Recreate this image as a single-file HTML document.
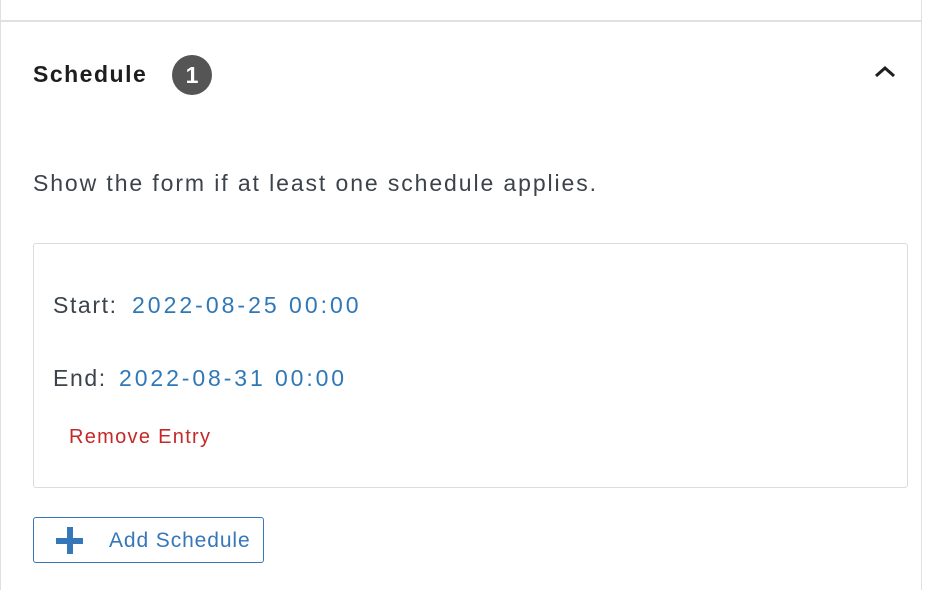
<!DOCTYPE html>
<html><head><style>
body{margin:0;width:940px;height:590px;background:#fff;font-family:"Liberation Sans",sans-serif;position:relative;overflow:hidden}
.a{position:absolute;white-space:nowrap}
</style></head><body>
<div class="a" style="left:0;top:0;width:1px;height:590px;background:#e0e0e0"></div>
<div class="a" style="left:921px;top:0;width:1px;height:590px;background:#e0e0e0"></div>
<div class="a" style="left:0;top:20px;width:922px;height:2px;background:#e0e0e0"></div>
<div class="a" style="left:33px;top:61px;font-size:23px;color:#1e1e1e;font-weight:bold;letter-spacing:1.5px">Schedule</div>
<div class="a" style="left:172px;top:55px;width:40px;height:40px;border-radius:50%;background:#555;color:#fff;font-size:23px;font-weight:bold;line-height:40px;text-align:center">1</div>
<svg class="a" style="left:872px;top:63px" width="26" height="18"><path d="M4 13 L13 5 L22 13" stroke="#1e1e1e" stroke-width="3" fill="none"/></svg>
<div class="a" style="left:33px;top:170px;font-size:23px;color:#3c434a;letter-spacing:1.9px">Show the form if at least one schedule applies.</div>
<div class="a" style="left:33px;top:243px;width:873px;height:243px;border:1px solid #dcdcde;border-radius:3px"></div>
<div class="a" style="left:53px;top:292px;font-size:23px;color:#3c434a;letter-spacing:1.6px">Start:</div>
<div class="a" style="left:132px;top:292px;font-size:23px;color:#2f78b8;letter-spacing:3px">2022-08-25 00:00</div>
<div class="a" style="left:53px;top:365px;font-size:23px;color:#3c434a;letter-spacing:1.6px">End:</div>
<div class="a" style="left:119px;top:365px;font-size:23px;color:#2f78b8;letter-spacing:2.9px">2022-08-31 00:00</div>
<div class="a" style="left:69px;top:426px;font-size:20px;color:#c62828;letter-spacing:1.3px">Remove Entry</div>
<div class="a" style="left:33px;top:517px;width:229px;height:44px;border:1.5px solid #3577b8;border-radius:3px"></div>
<div class="a" style="left:56px;top:538px;width:27px;height:6px;background:#3577b8"></div>
<div class="a" style="left:67px;top:527px;width:6px;height:27px;background:#3577b8"></div>
<div class="a" style="left:109px;top:529px;font-size:21px;color:#3577b8;letter-spacing:0.9px">Add Schedule</div>
</body></html>
